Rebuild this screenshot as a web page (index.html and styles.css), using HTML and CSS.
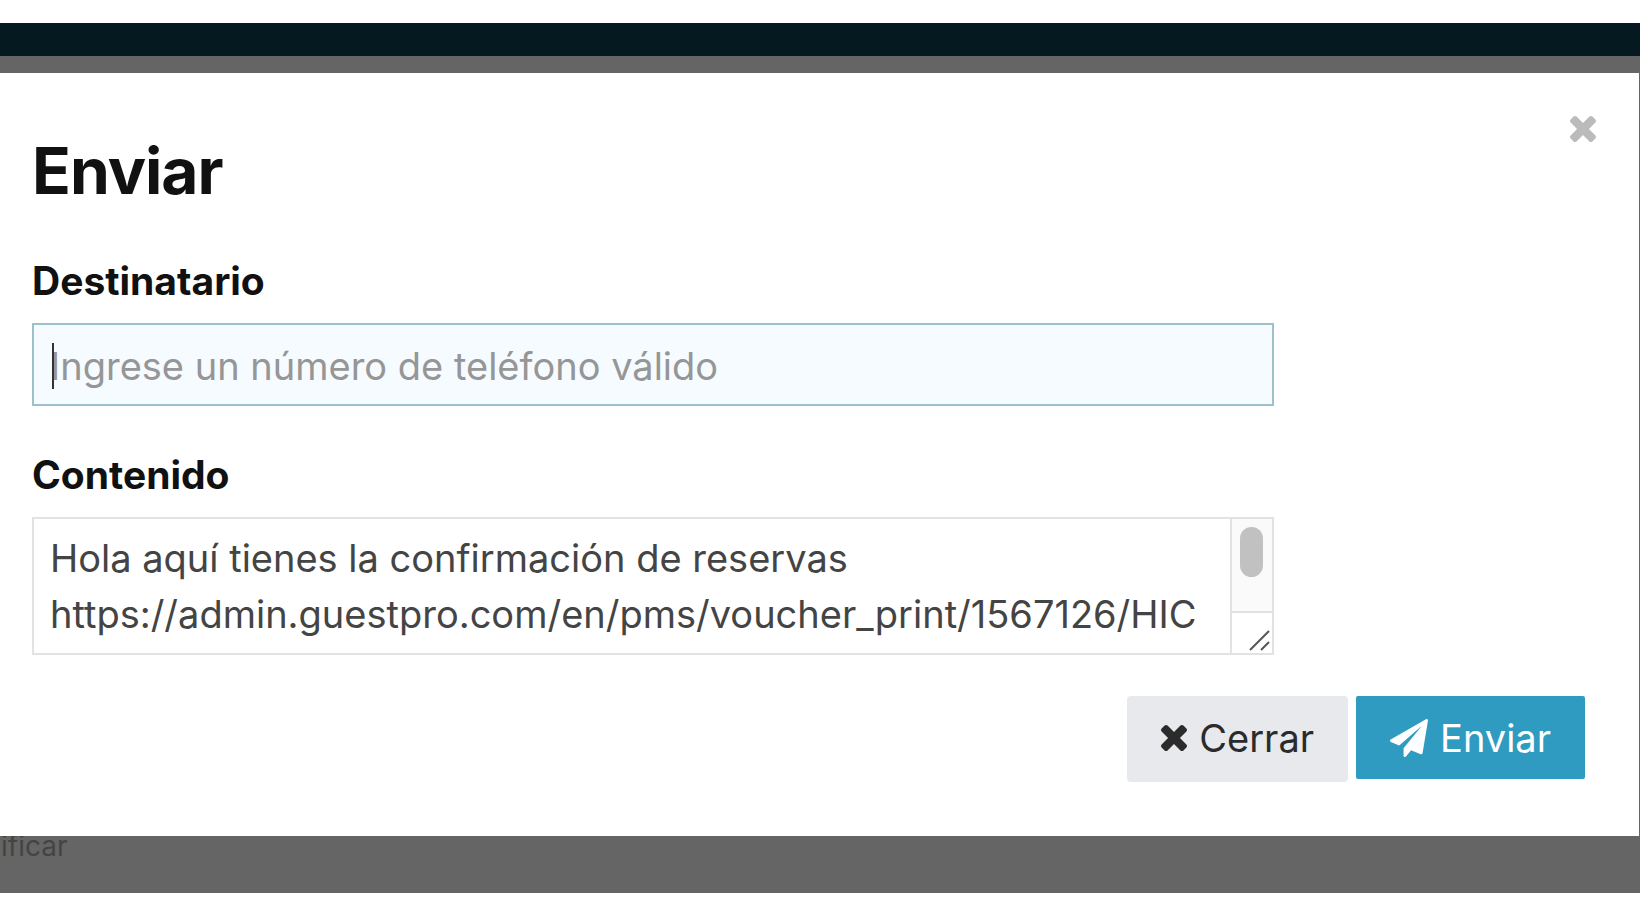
FILE: index.html
```html
<!DOCTYPE html>
<html lang="es">
<head>
    <meta charset="UTF-8">
    <meta name="viewport" content="width=device-width, initial-scale=1.0">
    <title>Enviar</title>
    <link rel="stylesheet" href="styles.css">
</head>
<body>
    <header class="topbar"></header>

    <main class="backdrop">
        <form class="modal" role="dialog" aria-labelledby="modalTitle">
            <button type="button" class="close-btn" aria-label="Cerrar">
                <svg viewBox="302 366 1188 1188" width="26" height="26"><path d="M1490 1322q0 40-28 68l-136 136q-28 28-68 28t-68-28l-294-294-294 294q-28 28-68 28t-68-28l-136-136q-28-28-28-68t28-68l294-294-294-294q-28-28-28-68t28-68l136-136q28-28 68-28t68 28l294 294 294-294q28-28 68-28t68 28l136 136q28 28 28 68t-28 68l-294 294 294 294q28 28 28 68z"/></svg>
            </button>

            <h1 class="title" id="modalTitle">Enviar</h1>

            <label for="recipient">Destinatario</label>
            <div class="field">
                <input type="text" id="recipient" placeholder="Ingrese un número de teléfono válido">
                <span class="caret"></span>
            </div>

            <label for="content">Contenido</label>
            <div class="field">
                <textarea id="content" rows="2">Hola aquí tienes la confirmación de reservas
https://admin.guestpro.com/en/pms/voucher_print/1567126/HIC</textarea>
                <div class="scrollbar" aria-hidden="true">
                    <div class="track"><div class="thumb"></div></div>
                    <svg class="grip" viewBox="0 0 40 40" width="40" height="40"><path d="M18 37L37 18M29 37L37 29"/></svg>
                </div>
            </div>

            <div class="actions">
                <button type="button" class="btn btn-close">
                    <svg viewBox="302 366 1188 1188" width="26" height="26"><path d="M1490 1322q0 40-28 68l-136 136q-28 28-68 28t-68-28l-294-294-294 294q-28 28-68 28t-68-28l-136-136q-28-28-28-68t28-68l294-294-294-294q-28-28-28-68t28-68l136-136q28-28 68-28t68 28l294 294 294-294q28-28 68-28t68 28l136 136q28 28 28 68t-28 68l-294 294 294 294q28 28 28 68z"/></svg>
                    Cerrar
                </button>
                <button type="submit" class="btn btn-send">
                    <svg viewBox="0 0 1792 1792" width="38" height="38"><path d="M1764 11q33 24 27 64l-256 1536q-5 29-32 45-14 8-31 8-11 0-24-5l-453-185-242 295q-18 23-49 23-13 0-22-4-19-7-30.500-23.500t-11.500-36.500v-349l864-1059-1069 925-395-162q-37-14-40-55-2-40 32-59l1664-960q15-9 32-9 20 0 36 11z"/></svg>
                    Enviar
                </button>
            </div>
        </form>

        <div class="behind">ificar</div>
    </main>
</body>
</html>
```

FILE: styles.css
```css
* {
    box-sizing: border-box;
}

body {
    display: flex;
    flex-direction: column;
    min-height: 100vh;
    margin: 0;
    padding: 23px 0 31px;
    background-color: #fff;
    color: #111;
    font-family: Inter, 'Liberation Sans', sans-serif;
    font-size: 38px;
}

.topbar {
    height: 33px;
    background-color: #041920;
}

.backdrop {
    flex: 1;
    padding-top: 17px;
    background-color: #656565;
}

.modal {
    position: relative;
    margin-right: 1px;
    padding: 62px 54px 54px 32px;
    background-color: #fff;
}

.close-btn {
    position: absolute;
    top: 43px;
    right: 43px;
    display: flex;
    padding: 0;
    border: none;
    background: none;
    color: #bbb;
    cursor: pointer;
}

svg {
    fill: currentColor;
}

.title {
    margin: 0 0 46px;
    font-size: 64px;
    font-weight: 700;
    line-height: 72px;
    letter-spacing: -1px;
}

label {
    display: block;
    margin-bottom: 14px;
    font-size: 39px;
    font-weight: 700;
    line-height: 56px;
}

.field {
    position: relative;
    max-width: 1242px;
    margin-bottom: 41px;
}

input,
textarea {
    display: block;
    width: 100%;
    border: 2px solid #e2e2e2;
    border-radius: 0;
    outline: none;
    font-family: inherit;
    font-size: 38px;
    color: #444;
}

input {
    height: 83px;
    padding: 2px 16px 0;
    border-color: #9dc1cb;
    background-color: #f5fbff;
}

input::placeholder {
    color: #969696;
}

textarea {
    height: 138px;
    padding: 11px 48px 11px 16px;
    line-height: 56px;
    overflow: hidden;
    resize: none;
}

.caret {
    position: absolute;
    top: 20px;
    left: 20px;
    width: 2px;
    height: 46px;
    background-color: #333;
}

/* scroll track and resize corner of the textarea */
.scrollbar {
    position: absolute;
    top: 2px;
    right: 2px;
    bottom: 2px;
    display: flex;
    flex-direction: column;
    width: 42px;
    border-left: 2px solid #e2e2e2;
    background-color: #fafafa;
}

.track {
    flex: 1;
    padding: 8px;
    border-bottom: 2px solid #e2e2e2;
}

.thumb {
    width: 23px;
    height: 50px;
    border-radius: 12px;
    background-color: #c1c1c1;
}

.grip {
    background-color: #fff;
    fill: none;
    stroke: #555;
    stroke-width: 2;
}

.actions {
    display: flex;
    justify-content: flex-end;
    align-items: flex-start;
    gap: 8px;
}

.btn {
    display: flex;
    align-items: center;
    gap: 12px;
    height: 83px;
    padding: 0 34px;
    border: none;
    font-family: inherit;
    font-size: 38px;
    cursor: pointer;
}

.btn-close {
    height: 86px;
    padding-bottom: 2px;
    border-radius: 4px;
    background-color: #e8e9ed;
    color: #2b2b2b;
}

.btn-send {
    border-radius: 2px;
    background-color: #2f9bc0;
    color: #fff;
}

.behind {
    padding-left: 1px;
    color: #444;
    font-size: 28px;
    line-height: 20px;
}
```
